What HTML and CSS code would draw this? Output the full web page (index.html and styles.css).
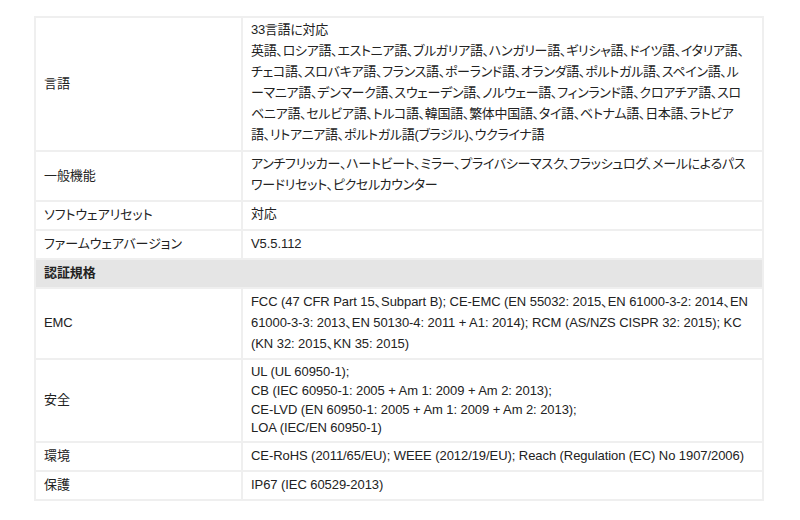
FILE: index.html
```html
<!DOCTYPE html>
<html lang="ja">
<head>
<meta charset="utf-8">
<link rel="stylesheet" href="styles.css">
</head>
<body>
<table class="spec">
  <colgroup><col class="c-label"><col class="c-value"></colgroup>
  <tbody>
    <tr>
      <td class="label">言語</td>
      <td class="value ja">33言語に対応<br>英語、ロシア語、エストニア語、ブルガリア語、ハンガリー語、ギリシャ語、ドイツ語、イタリア語、<br>チェコ語、スロバキア語、フランス語、ポーランド語、オランダ語、ポルトガル語、スペイン語、ル<br>ーマニア語、デンマーク語、スウェーデン語、ノルウェー語、フィンランド語、クロアチア語、スロ<br>ベニア語、セルビア語、トルコ語、韓国語、繁体中国語、タイ語、ベトナム語、日本語、ラトビア<br>語、リトアニア語、ポルトガル語(ブラジル)、ウクライナ語</td>
    </tr>
    <tr>
      <td class="label">一般機能</td>
      <td class="value ja">アンチフリッカー、ハートビート、ミラー、プライバシーマスク、フラッシュログ、メールによるパスワードリセット、ピクセルカウンター</td>
    </tr>
    <tr>
      <td class="label">ソフトウェアリセット</td>
      <td class="value ja">対応</td>
    </tr>
    <tr>
      <td class="label">ファームウェアバージョン</td>
      <td class="value">V5.5.112</td>
    </tr>
    <tr class="section">
      <td colspan="2">認証規格</td>
    </tr>
    <tr>
      <td class="label">EMC</td>
      <td class="value">FCC (47 CFR Part 15、Subpart B); CE-EMC (EN 55032: 2015、EN 61000-3-2: 2014、EN 61000-3-3: 2013、EN 50130-4: 2011 + A1: 2014); RCM (AS/NZS CISPR 32: 2015); KC (KN 32: 2015、KN 35: 2015)</td>
    </tr>
    <tr>
      <td class="label">安全</td>
      <td class="value latin">UL (UL 60950-1);<br>CB (IEC 60950-1: 2005 + Am 1: 2009 + Am 2: 2013);<br>CE-LVD (EN 60950-1: 2005 + Am 1: 2009 + Am 2: 2013);<br>LOA (IEC/EN 60950-1)</td>
    </tr>
    <tr>
      <td class="label">環境</td>
      <td class="value">CE-RoHS (2011/65/EU); WEEE (2012/19/EU); Reach (Regulation (EC) No 1907/2006)</td>
    </tr>
    <tr>
      <td class="label">保護</td>
      <td class="value">IP67 (IEC 60529-2013)</td>
    </tr>
  </tbody>
</table>
</body>
</html>
```

FILE: styles.css
```css
html, body {
  margin: 0;
  padding: 0;
  background: #ffffff;
}
body {
  padding: 16px 38px 0 34px;
  font-family: "Liberation Sans", "Noto Sans CJK JP", sans-serif;
  font-size: 13px;
  color: #222222;
  font-feature-settings: "palt";
  letter-spacing: -0.07px;
  line-break: loose;
}
.spec {
  width: 728px;
  border-collapse: collapse;
  table-layout: fixed;
}
.c-label { width: 207px; }
.c-value { width: 521px; }
.spec td {
  border: 2px solid #efefef;
  padding: 2px 8px 4px;
  line-height: 21px;
  vertical-align: middle;
}
.spec td.ja {
  letter-spacing: -0.3px;
  padding: 1px 8px 5px;
}
.spec td.latin {
  line-height: 18.75px;
  padding: 3px 8px 3px;
}
.section td {
  background: #e5e5e5;
  font-weight: bold;
}
```
